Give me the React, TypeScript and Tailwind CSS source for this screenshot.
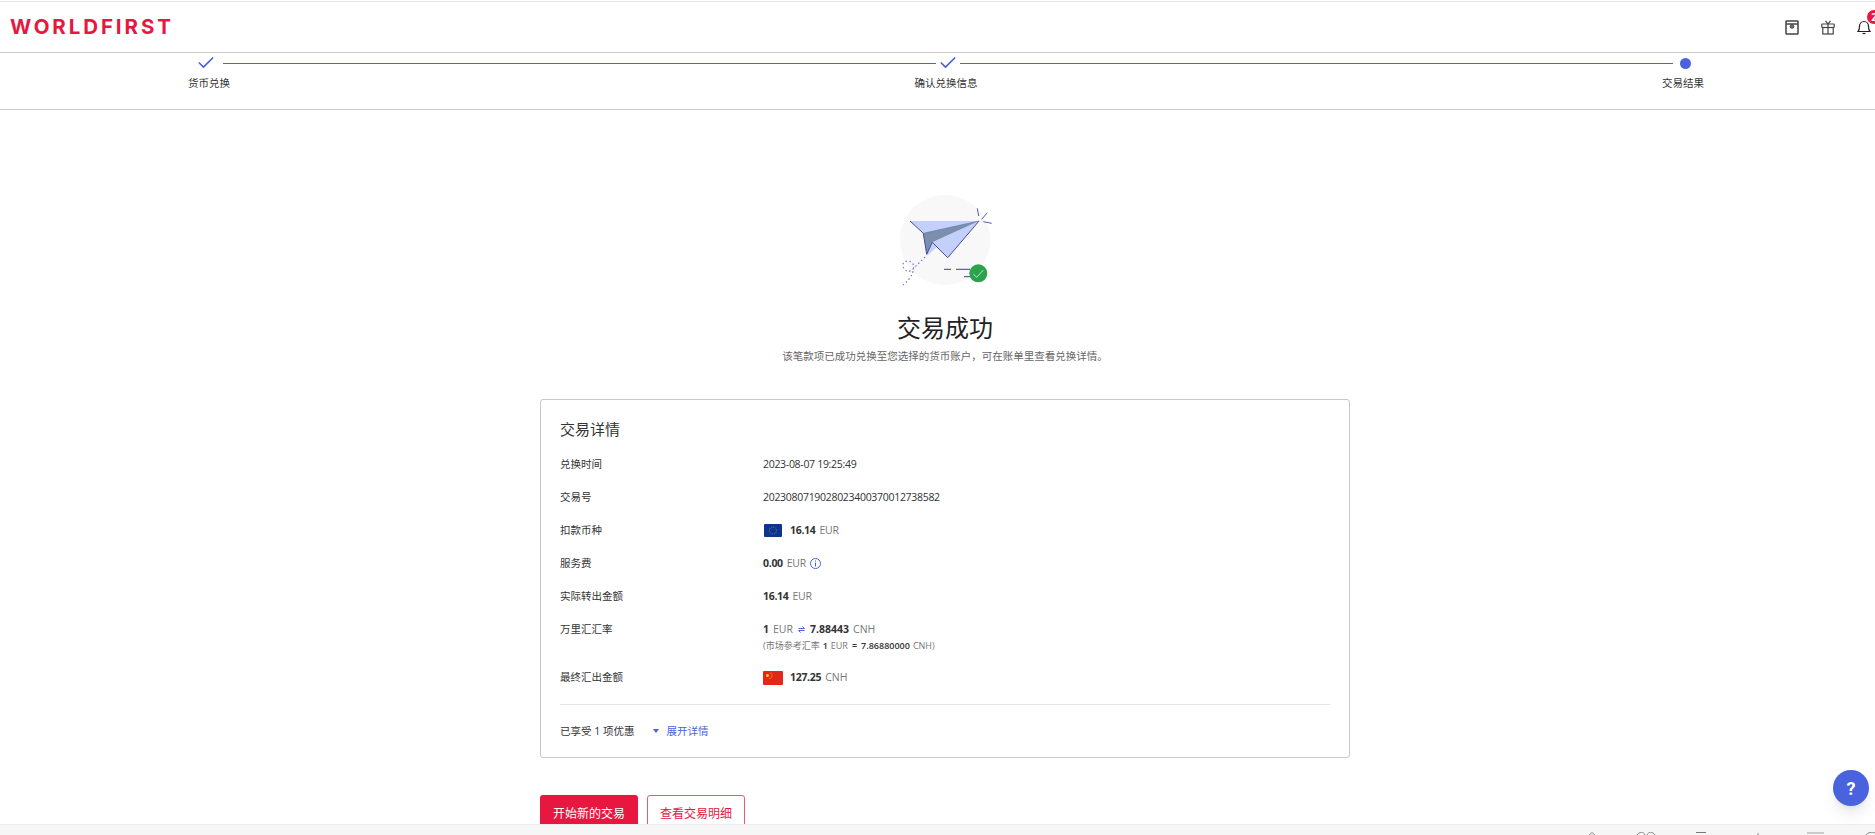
import { Check } from "lucide-react";

const FONT = "font-['Open_Sans','Noto_Sans_CJK_SC',sans-serif]";

function PlaneIllustration() {
  return (
    <svg width="100" height="100" viewBox="0 0 100 100" fill="none">
      <circle cx="50" cy="50" r="45" fill="#f8f8f8" />
      <path d="M15 31 L84 31 L28.300 43.300 Z" fill="#c2d0fb" />
      <path d="M84 31 L52.700 67.700 L37.300 52.300 Z" fill="#c2d0fb" />
      <path d="M31.700 64.300 L37.300 52.300 L42 57 L33 65 Z" fill="#c2d0fb" />
      <path d="M28.300 43.300 L84 31 L37.300 52.300 L31.700 64.300 Z" fill="#7a8fae" />
      <path d="M15 31 L28.300 43.300 L31.700 64.300 L37.300 52.300 L52.700 67.700 L84 31" stroke="#4a4a9c" strokeWidth="1" />
      <path d="M28.300 43.300 L84 31" stroke="#5d6aa8" strokeWidth="0.6" />
      <path d="M82.300 18.300 L83.700 26 M92.300 22.700 L86.700 29.300 M88.300 31.700 L96.700 33.300" stroke="#5b5aa8" strokeWidth="1" />
      <path d="M30 67 L17 80 C12 84 7 78 8 74 C9 70 16 70 18 74 C20 79 17 88 8 95" stroke="#7c78b8" strokeWidth="1.200" strokeDasharray="1.500 2.500" />
      <path d="M49 79.300 L56 79.300 M61 79.300 L75 79.300 M69 86.700 L76.700 86.700" stroke="#3d3d8f" strokeWidth="1" />
      <circle cx="83.300" cy="83.300" r="9" fill="#2ba24c" />
      <path d="M78.300 84 L81.700 87.300 L88.300 80" stroke="#bfe6c9" strokeWidth="1" />
    </svg>
  );
}

function Row({ label, children }: { label: string; children: React.ReactNode }) {
  return (
    <div className="flex h-[33px] items-center">
      <div className="w-[203px] shrink-0 text-[#333]">{label}</div>
      <div className="flex items-center tracking-[-0.3px] text-[#333]">{children}</div>
    </div>
  );
}

function Step({ label, done, className, labelClass }: { label: string; done?: boolean; className: string; labelClass: string }) {
  return (
    <div className={`flex shrink-0 flex-col items-center ${className}`}>
      <div className="flex h-[20px] items-center justify-center">
        {done ? (
          <Check className="h-[20px] w-[20px] text-[#4a62de]" strokeWidth={2} />
        ) : (
          <span className="h-[11px] w-[11px] rounded-full bg-[#4a62de]" />
        )}
      </div>
      <div className={`mt-[3px] whitespace-nowrap text-[10.5px] leading-[14px] text-[#333] ${labelClass}`}>{label}</div>
    </div>
  );
}

export default function App() {
  return (
    <div className={`${FONT} relative flex h-[835px] w-[1875px] flex-col overflow-hidden bg-white text-[10.5px]`}>
      <header className="mt-px flex h-[52px] shrink-0 items-center justify-between border-y border-[#e8e8e8] border-b-[#c8c8c8] pl-[10px]">
        <div className="font-['Inter',sans-serif] text-[20.5px] font-bold leading-none tracking-[2.9px] text-[#e8173f]">WORLDFIRST</div>
        <div className="flex items-center gap-[22px]">
          <svg width="14" height="15" viewBox="0 0 14 15" fill="none" stroke="#444" strokeWidth="1.500">
            <rect x="1" y="1" width="12" height="13" rx="0.500" />
            <path d="M1 4 H13" />
            <circle cx="7" cy="6.500" r="1.800" fill="#777" strokeWidth="1" />
          </svg>
          <svg width="14" height="15" viewBox="0 0 14 15" fill="none" stroke="#444" strokeWidth="1.200">
            <rect x="0.800" y="4" width="12.400" height="3.500" rx="0.500" />
            <rect x="1.800" y="7.500" width="10.400" height="6.500" />
            <path d="M7 4 V14 M4.500 0.800 L7 4 L9.500 0.800" />
          </svg>
          <div className="relative mr-[4px] h-[15px] w-[14px]">
            <svg width="14" height="15" viewBox="0 0 14 15" fill="none" stroke="#222" strokeWidth="1.200">
              <path d="M1 11.500 H13 C11.500 10 11.500 8.500 11.500 6.500 C11.500 3.500 9.500 1.500 7 1.500 C4.500 1.500 2.500 3.500 2.500 6.500 C2.500 8.500 2.500 10 1 11.500 Z" />
              <path d="M5.500 13.500 H8.500" />
            </svg>
            <span className="absolute left-[10px] top-[-10px] flex h-[14px] w-[14px] items-center justify-center rounded-full bg-[#e8173f] text-[10px] font-bold leading-none text-white">2</span>
          </div>
        </div>
      </header>

      <nav className="flex h-[57px] shrink-0 items-start border-b border-[#c8c8c8] pl-[189px] pr-[178px]">
        <Step label="货币兑换" done className="w-[34px]" labelClass="ml-[6px]" />
        <div className="mt-[10px] h-px flex-1 bg-[#4a62de]" />
        <Step label="确认兑换信息" done className="w-[24px]" labelClass="mr-[4px]" />
        <div className="mt-[10px] h-px flex-1 bg-[#4a62de]" />
        <Step label="交易结果" className="w-[24px]" labelClass="mr-[4px]" />
      </nav>

      <main className="flex min-h-0 flex-1 flex-col items-center overflow-hidden pl-[15px]">
        <div className="mt-[80px] h-[100px] w-[100px] shrink-0">
          <PlaneIllustration />
        </div>
        <h1 className="mt-[22px] text-[24px] font-normal leading-[32px] text-[#222]">交易成功</h1>
        <p className="mt-[5px] text-[10.5px] leading-[14px] text-[#666]">该笔款项已成功兑换至您选择的货币账户，可在账单里查看兑换详情。</p>

        <section className="mt-[36px] w-[810px] shrink-0 rounded-[3px] border border-[#c8c8c8] px-[19px] pb-[19px] pt-[19px]">
          <h2 className="mb-[9px] text-[15px] font-normal leading-[20px] text-[#333]">交易详情</h2>
          <Row label="兑换时间">2023-08-07 19:25:49</Row>
          <Row label="交易号">2023080719028023400370012738582</Row>
          <Row label="扣款币种">
            <svg width="18" height="13" viewBox="0 0 18 13" className="ml-px mr-[8px]">
              <rect width="18" height="13" rx="1" fill="#0f3391" />
              <circle cx="9" cy="6.500" r="3.500" fill="none" stroke="#c9b24a" strokeWidth="0.600" strokeDasharray="0.800 1" />
            </svg>
            <b className="font-bold">16.14</b>
            <span className="ml-1 text-[#777]">EUR</span>
          </Row>
          <Row label="服务费">
            <b className="font-bold">0.00</b>
            <span className="ml-1 text-[#777]">EUR</span>
            <svg width="11" height="11" viewBox="0 0 11 11" fill="none" stroke="#4a62de" className="ml-[4px]">
              <circle cx="5.500" cy="5.500" r="5" />
              <path d="M5.500 4.500 V8.500 M5.500 2.500 V3.500" />
            </svg>
          </Row>
          <Row label="实际转出金额">
            <b className="font-bold">16.14</b>
            <span className="ml-1 text-[#777]">EUR</span>
          </Row>
          <div className="flex h-[48px] pt-[9px]">
            <div className="w-[203px] shrink-0 leading-[15px] text-[#333]">万里汇汇率</div>
            <div>
              <div className="flex items-center leading-[15px] text-[#333]">
                <b className="font-bold">1</b>
                <span className="ml-1 text-[#777]">EUR</span>
                <svg width="7" height="7" viewBox="0 0 7 7" fill="none" stroke="#4a62de" className="mx-[5px]">
                  <path d="M0.500 2.500 H6.500 L4.500 0.500 M6.500 4.500 H0.500 L2.500 6.500" />
                </svg>
                <b className="font-bold">7.88443</b>
                <span className="ml-1 text-[#777]">CNH</span>
              </div>
              <div className="mt-[3px] flex gap-[3px] text-[9px] leading-[12px] text-[#777]">
                <span>(市场参考汇率</span>
                <b className="font-semibold text-[#333]">1</b>
                <span>EUR</span>
                <b className="mx-px font-semibold text-[#333]">=</b>
                <b className="font-semibold text-[#333]">7.86880000</b>
                <span>CNH)</span>
              </div>
            </div>
          </div>
          <div className="flex h-[33px] items-center">
            <div className="w-[203px] shrink-0 text-[#333]">最终汇出金额</div>
            <svg width="20" height="14" viewBox="0 0 20 14" className="mr-[7px]">
              <rect width="20" height="14" rx="1" fill="#e0291a" />
              <circle cx="4.500" cy="4.500" r="1.500" fill="#f5d90a" />
              <circle cx="8" cy="2" r="0.500" fill="#f5d90a" />
              <circle cx="9" cy="4" r="0.500" fill="#f5d90a" />
              <circle cx="8.500" cy="6" r="0.500" fill="#f5d90a" />
              <circle cx="7" cy="7.500" r="0.500" fill="#f5d90a" />
            </svg>
            <b className="font-bold tracking-[-0.3px] text-[#333]">127.25</b>
            <span className="ml-1 text-[#777]">CNH</span>
          </div>
          <div className="mt-[10px] border-t border-[#e4e4e4] pt-[19px]">
            <div className="flex items-center leading-[14px]">
              <span className="text-[#333]">已享受 1 项优惠</span>
              <span className="ml-[19px] mr-[7px] h-0 w-0 border-x-[3px] border-t-[4px] border-x-transparent border-t-[#4a62de]" />
              <span className="text-[#4a62de]">展开详情</span>
            </div>
          </div>
        </section>

        <div className="mt-[37px] flex w-[810px] shrink-0 gap-[9px]">
          <button type="button" className="h-[38px] w-[98px] rounded-[3px] bg-[#e8173f] text-[12px] text-white">开始新的交易</button>
          <button type="button" className="h-[38px] w-[98px] rounded-[3px] border border-[#ee5a75] bg-white text-[12px] text-[#e8173f]">查看交易明细</button>
        </div>
      </main>

      <footer className="flex h-[11px] shrink-0 items-end justify-end border-t border-[#ececec] bg-[#f6f6f6]">
        <svg width="315" height="3" viewBox="0 0 315 3" fill="none">
          <path d="M29 3 L32 0.500 L35 3" stroke="#888" />
          <path d="M77 3 C79 -0.500 84 -0.500 85 3 M87 3 C88 -0.500 93 -0.500 95 3" stroke="#888" />
          <path d="M136 0.500 H146" stroke="#777" />
          <path d="M198 1 V3" stroke="#888" />
          <path d="M247 1 H264" stroke="#ccc" strokeWidth="2" />
          <path d="M306 3 C308 0 312 0 315 1" stroke="#888" />
        </svg>
      </footer>

      <button type="button" className="absolute left-[1833px] top-[770px] flex h-9 w-9 items-center justify-center rounded-full bg-[#4a62de] font-['Roboto',sans-serif] text-[18px] font-bold text-white shadow-lg">?</button>
    </div>
  );
}
